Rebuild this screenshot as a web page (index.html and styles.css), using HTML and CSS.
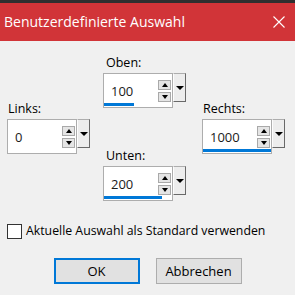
FILE: index.html
```html
<!DOCTYPE html>
<html lang="de">
<head>
    <meta charset="UTF-8">
    <title>Benutzerdefinierte Auswahl</title>
    <link rel="stylesheet" href="styles.css">
</head>
<body>
    <!-- Title Bar -->
    <div class="titlebar">
        <span class="title">Benutzerdefinierte Auswahl</span>
        <svg class="close" width="12" height="12" viewBox="0 0 12 12">
            <path d="M0.5 0.5 L11.5 11.5 M11.5 0.5 L0.5 11.5" stroke="#fff" stroke-width="1.1" fill="none"/>
        </svg>
    </div>

    <!-- Fields -->
    <div class="fields">
        <div class="col col-side">
            <div class="field-label">Links:</div>
            <div class="spin">
                <div class="spin-box">
                    <span class="spin-value">0</span>
                    <div class="spin-arrows">
                        <span class="arrow-btn"><span class="tri-up"></span></span>
                        <span class="arrow-btn"><span class="tri-down"></span></span>
                    </div>
                    <div class="spin-bar" style="width: 0px"></div>
                </div>
                <div class="drop-btn"><span class="tri-drop"></span></div>
            </div>
        </div>

        <div class="col col-mid">
            <div class="group">
                <div class="field-label">Oben:</div>
                <div class="spin">
                    <div class="spin-box">
                        <span class="spin-value">100</span>
                        <div class="spin-arrows">
                            <span class="arrow-btn"><span class="tri-up"></span></span>
                            <span class="arrow-btn"><span class="tri-down"></span></span>
                        </div>
                        <div class="spin-bar" style="width: 30px"></div>
                    </div>
                    <div class="drop-btn"><span class="tri-drop"></span></div>
                </div>
            </div>
            <div class="group group-bottom">
                <div class="field-label">Unten:</div>
                <div class="spin">
                    <div class="spin-box">
                        <span class="spin-value">200</span>
                        <div class="spin-arrows">
                            <span class="arrow-btn"><span class="tri-up"></span></span>
                            <span class="arrow-btn"><span class="tri-down"></span></span>
                        </div>
                        <div class="spin-bar" style="width: 58px"></div>
                    </div>
                    <div class="drop-btn"><span class="tri-drop"></span></div>
                </div>
            </div>
        </div>

        <div class="col col-side">
            <div class="field-label">Rechts:</div>
            <div class="spin">
                <div class="spin-box">
                    <span class="spin-value">1000</span>
                    <div class="spin-arrows">
                        <span class="arrow-btn"><span class="tri-up"></span></span>
                        <span class="arrow-btn"><span class="tri-down"></span></span>
                    </div>
                    <div class="spin-bar" style="width: 68px"></div>
                </div>
                <div class="drop-btn"><span class="tri-drop"></span></div>
            </div>
        </div>
    </div>

    <!-- Default checkbox -->
    <label class="check-row">
        <span class="check-box"></span>
        <span class="check-text">Aktuelle Auswahl als Standard verwenden</span>
    </label>

    <!-- Buttons -->
    <div class="buttons">
        <button class="btn btn-default">OK</button>
        <button class="btn">Abbrechen</button>
    </div>
</body>
</html>
```

FILE: styles.css
```css
/* General Styles */
* {
    margin: 0;
    padding: 0;
    box-sizing: border-box;
}

body {
    width: 295px;
    height: 295px;
    overflow: hidden;
    background-color: #f0f0f0;
    color: #000;
    font-family: 'Open Sans', 'Noto Sans', sans-serif;
    font-size: 12.5px;
    line-height: 16px;
}

/* Title Bar */
.titlebar {
    height: 41px;
    border-top: 3px solid #2f2f2f;
    background-color: #d13438;
    display: flex;
    align-items: center;
    justify-content: space-between;
    padding: 0 10px 0 4px;
}

.title {
    color: #fff;
    font-size: 14px;
    line-height: 20px;
}

.close {
    display: block;
}

/* Fields */
.fields {
    display: grid;
    grid-template-columns: 96px 99px 83px;
    padding-left: 7px;
}

.col-side {
    padding-top: 60px;
}

.col-mid {
    padding-top: 14px;
}

.group-bottom {
    margin-top: 40px;
}

.field-label {
    margin-bottom: 2px;
    padding-left: 1px;
    height: 16px;
}

.col-mid .field-label {
    padding-left: 3px;
}

.spin {
    display: flex;
    align-items: flex-start;
}

.spin-box {
    position: relative;
    width: 70px;
    height: 35px;
    background: #fff;
    border: 1px solid #adadad;
    display: flex;
    align-items: center;
    padding: 0 1px 0 7px;
}

.spin-value {
    flex: 1;
    font-size: 13px;
    color: #1a1a1a;
}

.spin-arrows {
    display: flex;
    flex-direction: column;
    gap: 2px;
}

.arrow-btn {
    width: 13px;
    height: 10px;
    background: #e5e5e5;
    border: 1px solid #a9a9a9;
    display: flex;
    align-items: center;
    justify-content: center;
}

.tri-up {
    border-left: 3px solid transparent;
    border-right: 3px solid transparent;
    border-bottom: 4px solid #000;
}

.tri-down {
    border-left: 3px solid transparent;
    border-right: 3px solid transparent;
    border-top: 4px solid #000;
}

.spin-bar {
    position: absolute;
    left: 0;
    bottom: 1px;
    height: 3px;
    background: #0078d7;
}

.drop-btn {
    width: 13px;
    height: 29px;
    background: #ededed;
    border-style: solid;
    border-width: 1px;
    border-color: #adadad #696969 #696969 #fdfdfd;
    display: flex;
    align-items: center;
    justify-content: center;
}

.tri-drop {
    border-left: 4px solid transparent;
    border-right: 4px solid transparent;
    border-top: 4px solid #000;
}

/* Checkbox */
.check-row {
    display: flex;
    align-items: center;
    gap: 4px;
    margin-top: 22px;
    padding-left: 7px;
    font-size: 12.3px;
}

.check-box {
    width: 15px;
    height: 15px;
    background: #fff;
    border: 1px solid #333;
}

/* Buttons */
.buttons {
    display: flex;
    justify-content: center;
    gap: 16px;
    margin-top: 19px;
}

.btn {
    width: 86px;
    height: 26px;
    background: #e1e1e1;
    border: 1px solid #adadad;
    font-family: inherit;
    font-size: 13px;
    color: #000;
}

.btn-default {
    border: 2px solid #0078d7;
}
```
